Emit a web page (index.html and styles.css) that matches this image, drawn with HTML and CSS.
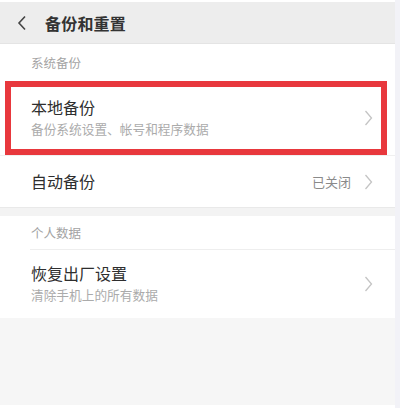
FILE: index.html
```html
<!DOCTYPE html>
<html lang="zh-CN">
<head>
<meta charset="utf-8">
<link rel="stylesheet" href="styles.css">
</head>
<body>
<div class="wrap">
  <div class="page">
    <div class="header">
      <svg class="back" width="10" height="16" viewBox="0 0 10 16"><path d="M8 1.5 L2 8 L8 14.5" fill="none" stroke="#444" stroke-width="1.6"/></svg>
      <span class="htitle">备份和重置</span>
    </div>
    <div class="section">
      <div class="label l1">系统备份</div>
      <div class="row r1">
        <div class="texts">
          <div class="title">本地备份</div>
          <div class="sub">备份系统设置、帐号和程序数据</div>
        </div>
        <svg class="chev" width="9" height="16" viewBox="0 0 9 16"><path d="M1.5 1 L7.5 8 L1.5 15" fill="none" stroke="#c4c4c4" stroke-width="1.3"/></svg>
        <div class="mark"></div>
      </div>
      <div class="row r2">
        <div class="title">自动备份</div>
        <span class="value">已关闭</span>
        <svg class="chev" width="9" height="16" viewBox="0 0 9 16"><path d="M1.5 1 L7.5 8 L1.5 15" fill="none" stroke="#c4c4c4" stroke-width="1.3"/></svg>
      </div>
    </div>
    <div class="gap"></div>
    <div class="section">
      <div class="label l2">个人数据</div>
      <div class="row r3">
        <div class="texts">
          <div class="title">恢复出厂设置</div>
          <div class="sub">清除手机上的所有数据</div>
        </div>
        <svg class="chev" width="9" height="16" viewBox="0 0 9 16"><path d="M1.5 1 L7.5 8 L1.5 15" fill="none" stroke="#c4c4c4" stroke-width="1.3"/></svg>
      </div>
    </div>
    <div class="rest"></div>
  </div>
  <div class="edge"></div>
</div>
</body>
</html>
```

FILE: styles.css
```css
html, body {
  margin: 0;
  padding: 0;
  background: #ffffff;
  font-family: "Noto Sans CJK SC", "Noto Sans", sans-serif;
}
.wrap {
  display: flex;
  width: 400px;
  height: 408px;
  overflow: hidden;
}
.page {
  width: 395px;
  display: flex;
  flex-direction: column;
  padding-top: 2px;
  background: #ffffff;
}
.edge {
  width: 5px;
  background: #f2f2f7;
}
.header {
  height: 41px;
  background: #ededed;
  display: flex;
  align-items: center;
  border-bottom: 1px solid #e4e4e4;
}
.back {
  margin-left: 17px;
  margin-right: 18px;
}
.htitle {
  font-size: 16px;
  font-weight: 700;
  color: #333333;
  letter-spacing: 0.2px;
}
.section {
  background: #ffffff;
}
.label {
  display: flex;
  align-items: center;
  padding-left: 31px;
  font-size: 12.5px;
  color: #a3a3a3;
}
.l1 {
  height: 37px;
}
.l2 {
  height: 33px;
  margin-left: 30px;
  padding-left: 1px;
  border-bottom: 1px solid #eeeeee;
}
.row {
  display: flex;
  align-items: center;
  padding-left: 31px;
  padding-right: 22px;
  position: relative;
}
.texts {
  flex: 1;
  display: flex;
  flex-direction: column;
}
.title {
  font-size: 16px;
  color: #2e2e2e;
  line-height: 21px;
}
.sub {
  font-size: 12.7px;
  color: #ababab;
  line-height: 18px;
  margin-top: 2px;
}
.r1 {
  height: 74px;
}
.r1 .texts {
  margin-top: -2px;
}
.r2 {
  height: 51px;
  border-top: 1px solid #f0f0f0;
}
.r2 .title {
  flex: 1;
}
.value {
  font-size: 13px;
  color: #8a8a8a;
  margin-right: 13px;
}
.r3 {
  height: 68px;
}
.r3 .texts {
  margin-top: -2px;
}
.chev {
  flex: none;
}
.mark {
  position: absolute;
  left: 5px;
  top: 0;
  width: 370px;
  height: 62px;
  border: 6px solid #e8383d;
}
.gap {
  height: 8px;
  background: #f3f3f3;
  border-top: 1px solid #e9e9e9;
}
.rest {
  flex: 1;
  background: #f6f6f6;
  border-bottom: 3px solid #ffffff;
}
```
